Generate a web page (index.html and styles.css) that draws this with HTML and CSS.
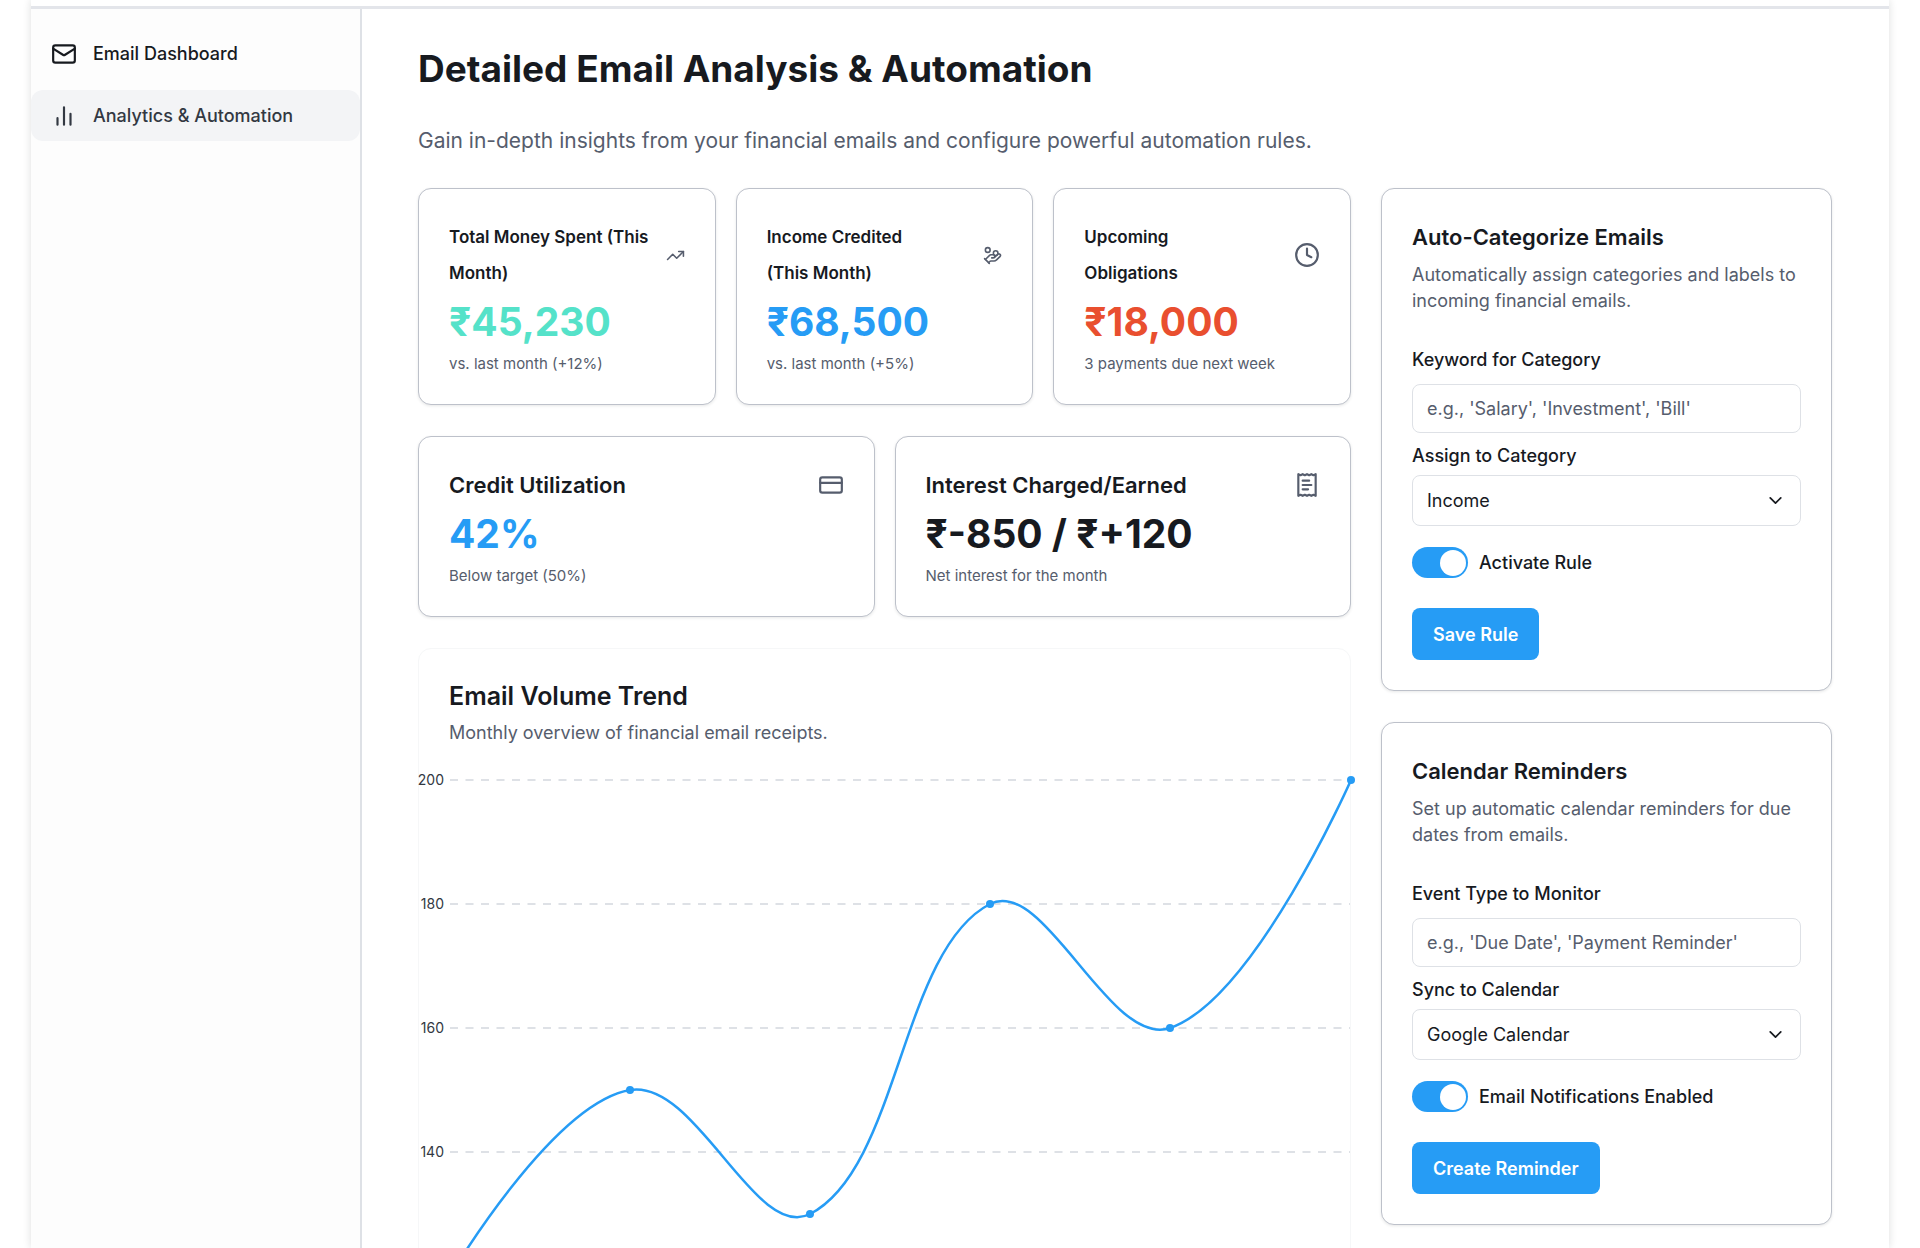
FILE: index.html
```html
<!DOCTYPE html>
<html lang="en">
<head>
    <meta charset="UTF-8">
    <meta name="viewport" content="width=device-width, initial-scale=1.0">
    <title>Email Analytics &amp; Automation</title>
    <link rel="stylesheet" href="styles.css">
</head>
<body>
    <div class="app">
        <header class="topbar"></header>
        <div class="layout">
            <nav class="sidebar">
                <a href="#" class="nav-item">
                    <svg class="icon" viewBox="0 0 24 24"><rect x="2" y="4" width="20" height="16" rx="2"/><path d="m22 7-8.97 5.7a1.94 1.94 0 0 1-2.06 0L2 7"/></svg>
                    Email Dashboard
                </a>
                <a href="#" class="nav-item active">
                    <svg class="icon" viewBox="0 0 24 24"><path d="M18 20V10M12 20V4M6 20v-6"/></svg>
                    Analytics &amp; Automation
                </a>
            </nav>

            <main class="main">
                <h1>Detailed Email Analysis &amp; Automation</h1>
                <p class="subtitle">Gain in-depth insights from your financial emails and configure powerful automation rules.</p>

                <div class="columns">
                    <div class="column">
                        <div class="stats stats-three">
                            <div class="card">
                                <div class="stat-head">
                                    <h2 class="stat-title small">Total Money Spent (This<br>Month)</h2>
                                    <svg class="icon icon-small" viewBox="0 0 24 24"><path d="m22 7-8.5 8.5-5-5L2 17"/><path d="M16 7h6v6"/></svg>
                                </div>
                                <div class="stat-value teal">₹45,230</div>
                                <p class="stat-note">vs. last month (+12%)</p>
                            </div>
                            <div class="card">
                                <div class="stat-head">
                                    <h2 class="stat-title small">Income Credited<br>(This Month)</h2>
                                    <svg class="icon icon-small" viewBox="0 0 24 24"><path d="M11 15h2a2 2 0 1 0 0-4h-3c-.6 0-1.1.2-1.4.6L3 17"/><path d="m7 21 1.6-1.4c.3-.4.8-.6 1.4-.6h4c1.1 0 2.1-.4 2.8-1.2l4.6-4.4a2 2 0 0 0-2.75-2.91l-4.2 3.9"/><path d="m2 16 6 6"/><circle cx="16" cy="9" r="2.9"/><circle cx="6" cy="5" r="3"/></svg>
                                </div>
                                <div class="stat-value blue">₹68,500</div>
                                <p class="stat-note">vs. last month (+5%)</p>
                            </div>
                            <div class="card">
                                <div class="stat-head">
                                    <h2 class="stat-title small">Upcoming<br>Obligations</h2>
                                    <svg class="icon" viewBox="0 0 24 24"><circle cx="12" cy="12" r="10"/><path d="M12 6v6l4 2"/></svg>
                                </div>
                                <div class="stat-value red">₹18,000</div>
                                <p class="stat-note">3 payments due next week</p>
                            </div>
                        </div>

                        <div class="stats stats-two">
                            <div class="card">
                                <div class="stat-head">
                                    <h2 class="stat-title">Credit Utilization</h2>
                                    <svg class="icon" viewBox="0 0 24 24"><rect x="2" y="5" width="20" height="14" rx="2"/><path d="M2 10h20"/></svg>
                                </div>
                                <div class="stat-value blue">42%</div>
                                <p class="stat-note">Below target (50%)</p>
                            </div>
                            <div class="card">
                                <div class="stat-head">
                                    <h2 class="stat-title">Interest Charged/Earned</h2>
                                    <svg class="icon" viewBox="0 0 24 24"><path d="M4 2v20l2-1 2 1 2-1 2 1 2-1 2 1 2-1 2 1V2l-2 1-2-1-2 1-2-1-2 1-2-1-2 1Z"/><path d="M14 8H8M16 12H8M13 16H8"/></svg>
                                </div>
                                <div class="stat-value">₹-850 / ₹+120</div>
                                <p class="stat-note">Net interest for the month</p>
                            </div>
                        </div>

                        <div class="chart-card">
                            <div class="chart-head">
                                <h2 class="chart-title">Email Volume Trend</h2>
                                <p class="description">Monthly overview of financial email receipts.</p>
                            </div>
                            <svg class="chart" viewBox="0 0 931 560">
                                <g class="grid">
                                    <path d="M31 32H931M31 156H931M31 280H931M31 404H931M31 528H931"/>
                                </g>
                                <g class="ticks">
                                    <text x="25" y="37">200</text>
                                    <text x="25" y="161">180</text>
                                    <text x="25" y="285">160</text>
                                    <text x="25" y="409">140</text>
                                </g>
                                <path class="line" d="M31 528C31 528 133 355.4 211 342C277 330.6 336.5 494.2 391 466C480.5 419.8 481.5 202.2 571 156C625.5 127.8 691 300.6 751 280C835.3 251 932 32 932 32"/>
                                <g class="dots">
                                    <circle cx="31" cy="528" r="4"/>
                                    <circle cx="211" cy="342" r="4"/>
                                    <circle cx="391" cy="466" r="4"/>
                                    <circle cx="571" cy="156" r="4"/>
                                    <circle cx="751" cy="280" r="4"/>
                                    <circle cx="932" cy="32" r="4"/>
                                </g>
                            </svg>
                        </div>
                    </div>

                    <div class="column">
                        <form class="card">
                            <h2 class="form-title">Auto-Categorize Emails</h2>
                            <p class="description">Automatically assign categories and labels to incoming financial emails.</p>
                            <div class="fields">
                                <label for="keyword">Keyword for Category</label>
                                <input class="text-input" type="text" id="keyword" placeholder="e.g., 'Salary', 'Investment', 'Bill'">
                                <label for="category">Assign to Category</label>
                                <div class="select-wrap">
                                    <select id="category">
                                        <option>Income</option>
                                        <option>Investment</option>
                                        <option>Bill</option>
                                    </select>
                                    <svg class="chevron" viewBox="0 0 24 24"><path d="m6 9 6 6 6-6"/></svg>
                                </div>
                                <div class="switch-row">
                                    <input class="switch" type="checkbox" id="activate" checked>
                                    <label for="activate">Activate Rule</label>
                                </div>
                                <button type="button">Save Rule</button>
                            </div>
                        </form>

                        <form class="card">
                            <h2 class="form-title">Calendar Reminders</h2>
                            <p class="description">Set up automatic calendar reminders for due dates from emails.</p>
                            <div class="fields">
                                <label for="event">Event Type to Monitor</label>
                                <input class="text-input" type="text" id="event" placeholder="e.g., 'Due Date', 'Payment Reminder'">
                                <label for="calendar">Sync to Calendar</label>
                                <div class="select-wrap">
                                    <select id="calendar">
                                        <option>Google Calendar</option>
                                        <option>Outlook Calendar</option>
                                    </select>
                                    <svg class="chevron" viewBox="0 0 24 24"><path d="m6 9 6 6 6-6"/></svg>
                                </div>
                                <div class="switch-row">
                                    <input class="switch" type="checkbox" id="notify" checked>
                                    <label for="notify">Email Notifications Enabled</label>
                                </div>
                                <button type="button">Create Reminder</button>
                            </div>
                        </form>
                    </div>
                </div>
            </main>
        </div>
    </div>
</body>
</html>
```

FILE: styles.css
```css
* {
    box-sizing: border-box;
}

body {
    margin: 0;
    font-family: 'Inter', sans-serif;
    font-size: 18px;
    line-height: 26px;
    color: #171a1f;
    background-color: #fff;
}

h1,
h2,
p {
    margin: 0;
}

.app {
    display: flex;
    flex-direction: column;
    height: 100vh;
    margin: 0 31px;
    overflow: hidden;
    background-color: #fff;
    box-shadow: 0 0 8px rgba(23, 26, 31, 0.14);
}

.topbar {
    flex: none;
    height: 9px;
    border-bottom: 3px solid #e3e5ea;
}

.layout {
    display: flex;
    flex: 1;
    min-height: 0;
}

.icon {
    flex: none;
    width: 26px;
    height: 26px;
    fill: none;
    stroke: currentColor;
    stroke-width: 2;
    stroke-linecap: round;
    stroke-linejoin: round;
}

.icon-small {
    width: 19px;
    height: 19px;
}

/* Sidebar */
.sidebar {
    display: flex;
    flex: none;
    flex-direction: column;
    gap: 11px;
    width: 331px;
    padding-top: 19px;
    background-color: #fdfdfd;
    border-right: 2px solid #dee1e6;
}

.nav-item {
    display: flex;
    align-items: center;
    gap: 16px;
    height: 51px;
    padding: 0 20px;
    border-radius: 12px;
    color: #171a1f;
    font-weight: 500;
    text-decoration: none;
}

.nav-item.active {
    background-color: #f3f4f6;
    color: #323842;
}

/* Main area */
.main {
    flex: 1;
    min-width: 0;
    padding: 37px 57px 37px 56px;
    overflow-y: auto;
    scrollbar-width: none;
}

h1 {
    font-size: 37px;
    line-height: 46px;
    font-weight: 700;
}

.subtitle {
    margin: 34px 0 32px;
    font-size: 21px;
    line-height: 30px;
    color: #565d6d;
}

.columns {
    display: grid;
    grid-template-columns: minmax(0, 1fr) 451px;
    gap: 30px;
}

.column {
    display: flex;
    flex-direction: column;
    gap: 31px;
}

.card {
    padding: 30px;
    background-color: #fff;
    border: 1px solid #bdc1ca;
    border-radius: 13px;
    box-shadow: 0 1px 3px rgba(23, 26, 31, 0.1);
}

/* Stat cards */
.stats {
    display: grid;
    gap: 20px;
}

.stats-three {
    grid-template-columns: repeat(3, minmax(0, 1fr));
}

.stats-two {
    grid-template-columns: repeat(2, minmax(0, 1fr));
}

.stat-head {
    display: flex;
    align-items: center;
    justify-content: space-between;
    margin-bottom: 8px;
}

.stat-head .icon {
    color: #565d6d;
}

.stat-title {
    font-size: 22px;
    line-height: 36px;
    font-weight: 600;
    white-space: nowrap;
}

.stat-title.small {
    font-size: 17px;
}

.stat-value {
    margin-bottom: 8px;
    font-size: 39px;
    line-height: 46px;
    font-weight: 700;
}

.teal {
    color: #55e2c9;
}

.blue {
    color: #269cf5;
}

.red {
    color: #e94f2f;
}

.stat-note {
    font-size: 15px;
    line-height: 21px;
    color: #565d6d;
}

/* Chart */
.chart-card {
    border: 1px solid #f6f7f8;
    border-radius: 13px;
}

.chart-head {
    padding: 30px 30px 2px;
}

.chart-title {
    font-size: 25px;
    line-height: 34px;
    font-weight: 600;
}

.description {
    margin-top: 7px;
    color: #565d6d;
}

.chart {
    display: block;
    width: 100%;
    overflow: visible;
}

.grid {
    fill: none;
    stroke: #dee1e6;
    stroke-width: 2;
    stroke-dasharray: 8 7.5;
}

.ticks {
    font-size: 14px;
    fill: #323842;
    text-anchor: end;
}

.line {
    fill: none;
    stroke: #269cf5;
    stroke-width: 2.5;
}

.dots {
    fill: #269cf5;
}

/* Forms */
.form-title {
    font-size: 22px;
    line-height: 36px;
    font-weight: 600;
}

.fields {
    display: flex;
    flex-direction: column;
    align-items: flex-start;
    margin-top: 33px;
}

label {
    font-weight: 500;
}

.text-input,
select {
    width: 100%;
    padding: 0 14px;
    border: 1px solid #dee1e6;
    border-radius: 8px;
    background-color: #fff;
    font-family: inherit;
    font-size: 18px;
    color: #171a1f;
}

.text-input {
    height: 49px;
    margin: 11px 0 10px;
}

.text-input::placeholder {
    color: #565d6d;
    opacity: 1;
}

.select-wrap {
    position: relative;
    width: 100%;
    margin-top: 6px;
}

select {
    display: block;
    height: 51px;
    appearance: none;
}

.chevron {
    position: absolute;
    top: 15px;
    right: 15px;
    width: 21px;
    height: 21px;
    fill: none;
    stroke: #171a1f;
    stroke-width: 2;
    stroke-linecap: round;
    stroke-linejoin: round;
    pointer-events: none;
}

.switch-row {
    display: flex;
    align-items: center;
    gap: 11px;
    margin: 21px 0 30px;
}

.switch {
    display: flex;
    align-items: center;
    justify-content: flex-end;
    width: 56px;
    height: 31px;
    margin: 0;
    padding: 0 2px;
    border-radius: 16px;
    background-color: #269cf5;
    appearance: none;
    cursor: pointer;
}

.switch::before {
    content: "";
    width: 26px;
    height: 26px;
    border-radius: 50%;
    background-color: #fff;
}

.switch:not(:checked) {
    justify-content: flex-start;
    background-color: #bdc1ca;
}

button {
    height: 52px;
    padding: 0 21px;
    border: none;
    border-radius: 8px;
    background-color: #269cf5;
    color: #fff;
    font-family: inherit;
    font-size: 18px;
    font-weight: 600;
    cursor: pointer;
}
```
